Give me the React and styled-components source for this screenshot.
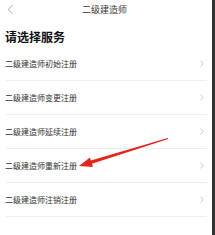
import React from 'react';
import styled, { createGlobalStyle } from 'styled-components';

const GlobalStyle = createGlobalStyle`
  html, body {
    margin: 0;
    padding: 0;
    background: #fff;
  }
  body {
    font-family: "Noto Sans CJK SC", "Noto Sans", sans-serif;
  }
`;

const StyledPage = styled.div`
  position: relative;
  width: 215px;
  height: 235px;
  box-sizing: border-box;
  border-right: 3px solid #333;
  background: #fff;
  overflow: hidden;
`;

const StyledNav = styled.div`
  position: relative;
  height: 20px;
  display: flex;
  align-items: center;
  justify-content: center;
`;

const StyledBack = styled.div`
  position: absolute;
  left: 7px;
  top: 4px;
  display: flex;
`;

const StyledTitle = styled.div`
  font-size: 9px;
  line-height: 20px;
  color: #333;
  padding-right: 3px;
`;

const StyledHeading = styled.h1`
  margin: 8px 0 1px;
  padding-left: 5px;
  font-size: 12px;
  line-height: 18px;
  font-weight: 700;
  color: #111;
`;

const StyledList = styled.div`
  display: flex;
  flex-direction: column;
`;

const StyledRow = styled.div`
  height: 34px;
  box-sizing: border-box;
  margin: 0 5px 0 6px;
  display: flex;
  align-items: center;
  justify-content: space-between;
  border-bottom: 1px solid #eee;
`;

const StyledRowText = styled.span`
  font-size: 8px;
  line-height: 12px;
  color: #333;
  margin-left: -1px;
`;

const StyledChevron = styled.div`
  display: flex;
  margin-right: 3px;
`;

const StyledArrow = styled.svg`
  position: absolute;
  left: 0;
  top: 0;
  pointer-events: none;
`;

const items = [
  '二级建造师初始注册',
  '二级建造师变更注册',
  '二级建造师延续注册',
  '二级建造师重新注册',
  '二级建造师注销注册',
];

const App = () => (
  <StyledPage>
    <GlobalStyle />
    <StyledNav>
      <StyledBack>
        <svg width="7" height="11" viewBox="0 0 7 11">
          <polyline points="5.5,1 1.5,5.5 5.5,10" fill="none" stroke="#bdbdbd" strokeWidth="1.1" />
        </svg>
      </StyledBack>
      <StyledTitle>二级建造师</StyledTitle>
    </StyledNav>
    <StyledHeading>请选择服务</StyledHeading>
    <StyledList>
      {items.map(text => (
        <StyledRow key={text}>
          <StyledRowText>{text}</StyledRowText>
          <StyledChevron>
            <svg width="4" height="7" viewBox="0 0 4 7">
              <polyline points="0.6,0.6 3.2,3.5 0.6,6.4" fill="none" stroke="#c4c4c4" strokeWidth="0.9" />
            </svg>
          </StyledChevron>
        </StyledRow>
      ))}
    </StyledList>
    <StyledArrow width="215" height="235" viewBox="0 0 215 235">
      <polygon
        points="168.2,139.1 167.8,137.9 90.9,160.6 89.9,157.4 79,166 92.9,167 91.9,163.7"
        fill="#e3261c"
      />
    </StyledArrow>
  </StyledPage>
);

export default App;
